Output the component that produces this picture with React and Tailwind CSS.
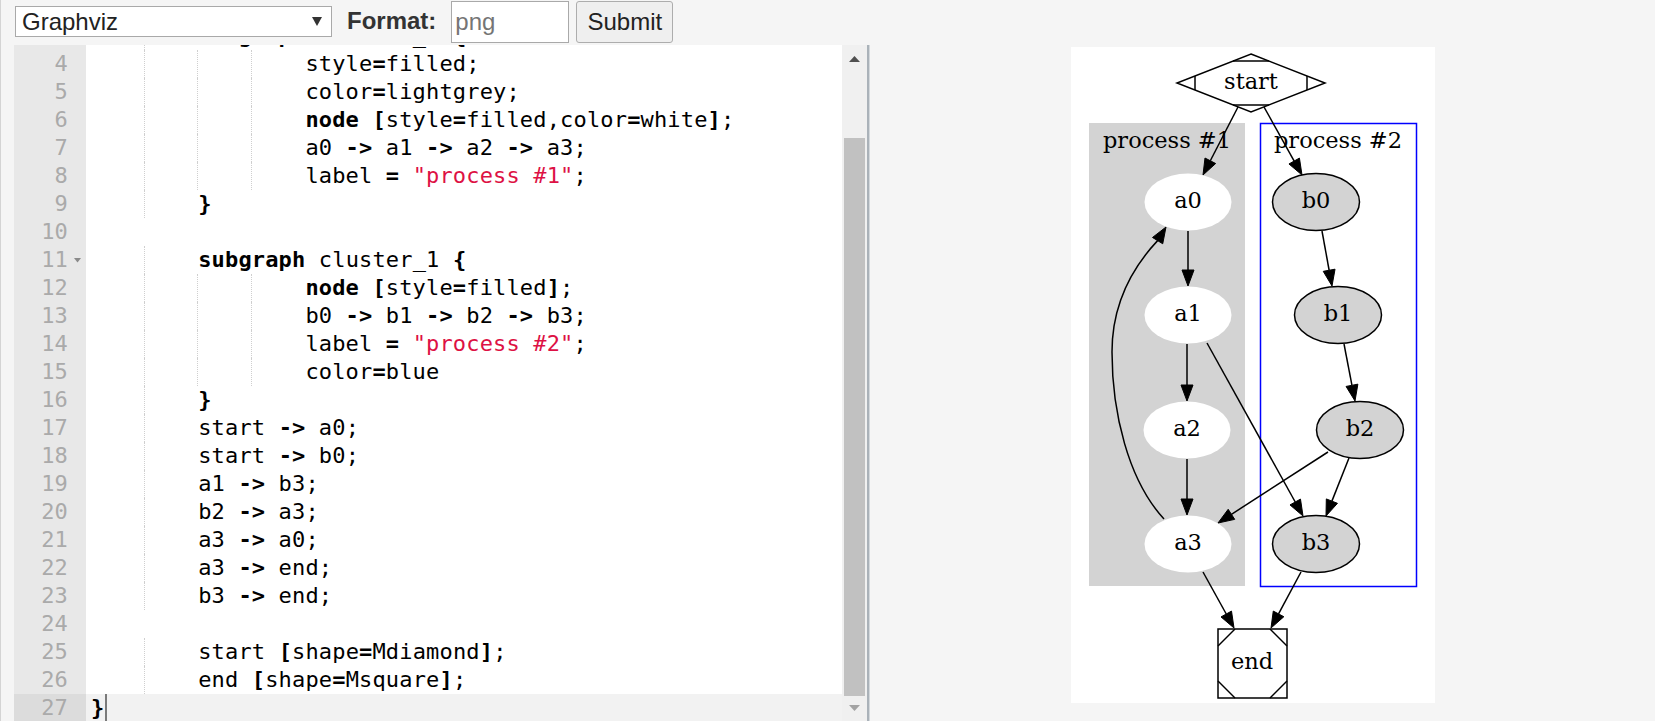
import React from "react";

const K = "k";
const S = "s";
const LINES = [
  { n: 3, t: 2, s: [["subgraph", K], [" cluster_0 "], ["{", K]] },
  { n: 4, t: 4, s: [["style"], ["=", K], ["filled;"]] },
  { n: 5, t: 4, s: [["color"], ["=", K], ["lightgrey;"]] },
  { n: 6, t: 4, s: [["node", K], [" "], ["[", K], ["style"], ["=", K], ["filled,color"], ["=", K], ["white"], ["]", K], [";"]] },
  { n: 7, t: 4, s: [["a0 "], ["->", K], [" a1 "], ["->", K], [" a2 "], ["->", K], [" a3;"]] },
  { n: 8, t: 4, s: [["label "], ["=", K], [" "], ['"process #1"', S], [";"]] },
  { n: 9, t: 2, s: [["}", K]] },
  { n: 10, t: 0, s: [] },
  { n: 11, t: 2, s: [["subgraph", K], [" cluster_1 "], ["{", K]], fold: true },
  { n: 12, t: 4, s: [["node", K], [" "], ["[", K], ["style"], ["=", K], ["filled"], ["]", K], [";"]] },
  { n: 13, t: 4, s: [["b0 "], ["->", K], [" b1 "], ["->", K], [" b2 "], ["->", K], [" b3;"]] },
  { n: 14, t: 4, s: [["label "], ["=", K], [" "], ['"process #2"', S], [";"]] },
  { n: 15, t: 4, s: [["color"], ["=", K], ["blue"]] },
  { n: 16, t: 2, s: [["}", K]] },
  { n: 17, t: 2, s: [["start "], ["->", K], [" a0;"]] },
  { n: 18, t: 2, s: [["start "], ["->", K], [" b0;"]] },
  { n: 19, t: 2, s: [["a1 "], ["->", K], [" b3;"]] },
  { n: 20, t: 2, s: [["b2 "], ["->", K], [" a3;"]] },
  { n: 21, t: 2, s: [["a3 "], ["->", K], [" a0;"]] },
  { n: 22, t: 2, s: [["a3 "], ["->", K], [" end;"]] },
  { n: 23, t: 2, s: [["b3 "], ["->", K], [" end;"]] },
  { n: 24, t: 0, s: [] },
  { n: 25, t: 2, s: [["start "], ["[", K], ["shape"], ["=", K], ["Mdiamond"], ["]", K], [";"]] },
  { n: 26, t: 2, s: [["end "], ["[", K], ["shape"], ["=", K], ["Msquare"], ["]", K], [";"]] },
  { n: 27, t: 0, s: [["}", K]], active: true },
];

function CodeLine({ line }) {
  const tabs = [];
  for (let i = 0; i < line.t; i++) {
    const guide = i < line.t - 1;
    tabs.push(
      <span
        key={"t" + i}
        className={
          guide
            ? "inline-block w-[53.6px] h-[28px] align-top border-r border-dotted border-[#cfcfcf]"
            : "inline-block w-[53.6px] h-[28px] align-top"
        }
      />
    );
  }
  return (
    <div className="flex h-[28px]">
      <div
        className={
          (line.active ? "bg-[#dcdcdc] " : "bg-[#e8e8e8] ") +
          "relative w-[72px] shrink-0 text-right pr-[18px] text-[#aaaaaa]"
        }
      >
        {line.n}
        {line.fold && (
          <svg className="absolute left-[60px] top-[12px]" width="7" height="5" viewBox="0 0 7 5">
            <polygon points="0,0 7,0 3.5,4.5" fill="#8a8a8a" />
          </svg>
        )}
      </div>
      <div
        className={
          (line.active ? "bg-[#f2f2f2] " : "bg-white ") +
          "relative flex-1 pl-[5px] whitespace-pre text-black"
        }
      >
        {tabs}
        {line.s.map((seg, i) => (
          <span
            key={i}
            className={seg[1] === K ? "font-bold" : seg[1] === S ? "text-[#dd1144]" : ""}
          >
            {seg[0]}
          </span>
        ))}
        {line.active && <span className="absolute left-[19px] top-0 w-[2px] h-[28px] bg-[#7a7a7a]" />}
      </div>
    </div>
  );
}

function arrowHead(x1, y1, x2, y2, len = 16, hw = 6) {
  const dx = x2 - x1;
  const dy = y2 - y1;
  const d = Math.hypot(dx, dy);
  const ux = dx / d;
  const uy = dy / d;
  const bx = x2 - ux * len;
  const by = y2 - uy * len;
  return {
    bx,
    by,
    pts: `${x2},${y2} ${bx - uy * hw},${by + ux * hw} ${bx + uy * hw},${by - ux * hw}`,
  };
}

const STRAIGHT = [
  [1238, 107, 1203, 175],
  [1264, 107, 1302, 175],
  [1188, 231, 1188, 286],
  [1187, 344, 1187, 401],
  [1187, 459, 1187, 515],
  [1322, 231, 1332, 286],
  [1344, 344, 1355, 401],
  [1349, 458, 1326, 516],
  [1207, 343, 1303, 516],
  [1328, 452, 1218, 523],
  [1203, 572, 1234, 628],
  [1301, 572, 1271, 628],
];

function Graph() {
  const back = arrowHead(1158, 240, 1166, 227);
  const font = { fontFamily: "'DejaVu Serif', serif", fontSize: 22.5 };
  const sw = 1.5;
  return (
    <svg width="364" height="656" viewBox="1071 47 364 656">
      <rect x="1071" y="47" width="364" height="656" fill="#ffffff" />
      <rect x="1089" y="123" width="156" height="463" fill="#d3d3d3" />
      <rect x="1260.5" y="123.5" width="156" height="463" fill="none" stroke="#0000ff" strokeWidth="1.5" />
      <text x="1167" y="148" textAnchor="middle" fill="#000" {...font}>process #1</text>
      <text x="1338" y="148" textAnchor="middle" fill="#000" {...font}>process #2</text>

      <polygon points="1251,54 1325,83 1251,112 1177,83" fill="#fff" stroke="#000" strokeWidth={sw} />
      <line x1="1233" y1="61" x2="1269" y2="61" stroke="#000" strokeWidth={sw} />
      <line x1="1233" y1="105" x2="1269" y2="105" stroke="#000" strokeWidth={sw} />
      <line x1="1195" y1="76" x2="1195" y2="90" stroke="#000" strokeWidth={sw} />
      <line x1="1307" y1="76" x2="1307" y2="90" stroke="#000" strokeWidth={sw} />
      <text x="1251" y="89" textAnchor="middle" fill="#000" {...font}>start</text>

      {[
        [1188, 202, "a0"],
        [1188, 315, "a1"],
        [1187, 430, "a2"],
        [1188, 544, "a3"],
      ].map(([cx, cy, l]) => (
        <g key={l}>
          <ellipse cx={cx} cy={cy} rx="43.5" ry="28.5" fill="#fff" />
          <text x={cx} y={cy + 6} textAnchor="middle" fill="#000" {...font}>{l}</text>
        </g>
      ))}
      {[
        [1316, 202, "b0"],
        [1338, 315, "b1"],
        [1360, 430, "b2"],
        [1316, 544, "b3"],
      ].map(([cx, cy, l]) => (
        <g key={l}>
          <ellipse cx={cx} cy={cy} rx="43.5" ry="28.5" fill="#d3d3d3" stroke="#000" strokeWidth={sw} />
          <text x={cx} y={cy + 6} textAnchor="middle" fill="#000" {...font}>{l}</text>
        </g>
      ))}

      <rect x="1218" y="629" width="69" height="69" fill="#fff" stroke="#000" strokeWidth={sw} />
      <line x1="1218" y1="646" x2="1235" y2="629" stroke="#000" strokeWidth={sw} />
      <line x1="1270" y1="629" x2="1287" y2="646" stroke="#000" strokeWidth={sw} />
      <line x1="1218" y1="681" x2="1235" y2="698" stroke="#000" strokeWidth={sw} />
      <line x1="1270" y1="698" x2="1287" y2="681" stroke="#000" strokeWidth={sw} />
      <text x="1252" y="669" textAnchor="middle" fill="#000" {...font}>end</text>

      {STRAIGHT.map(([x1, y1, x2, y2], i) => {
        const a = arrowHead(x1, y1, x2, y2);
        return (
          <g key={i}>
            <line x1={x1} y1={y1} x2={a.bx} y2={a.by} stroke="#000" strokeWidth={sw} />
            <polygon points={a.pts} fill="#000" stroke="#000" strokeWidth="1" />
          </g>
        );
      })}
      <path
        d={`M1164,519 C1128,480 1112,412 1112,352 C1112,305 1132,268 ${back.bx},${back.by}`}
        fill="none"
        stroke="#000"
        strokeWidth={sw}
      />
      <polygon points={back.pts} fill="#000" stroke="#000" strokeWidth="1" />
    </svg>
  );
}

export default function App() {
  return (
    <div className="w-[1655px] h-[721px] bg-[#f5f5f5] overflow-hidden border-l border-[#d4d4d4] font-['Liberation_Sans',Arial,sans-serif]">
      <div className="h-[45px] flex items-start">
        <div className="ml-[14px] mt-[6px] w-[317px] h-[31px] bg-white border border-[#a9a9a9] flex items-center pl-[6px] pr-[9px] text-[24px] leading-none text-[#222]">
          <span className="flex-1">Graphviz</span>
          <svg width="10" height="9" viewBox="0 0 10 9">
            <polygon points="0,0 10,0 5,9" fill="#333" />
          </svg>
        </div>
        <div className="ml-[15px] mt-[7px] text-[24px] leading-[28px] font-bold text-[#333]">Format:</div>
        <input
          readOnly
          placeholder="png"
          className="ml-[15px] mt-[1px] w-[118px] h-[42px] bg-white border border-[#a9a9a9] px-[3px] text-[24px] text-[#222] placeholder:text-[#757575] outline-none font-['Liberation_Sans',Arial,sans-serif]"
        />
        <div className="ml-[7px] mt-[1px] w-[97px] h-[42px] bg-[#efefef] border border-[#adadad] rounded-[3px] flex items-center justify-center text-[24px] text-[#222]">
          Submit
        </div>
      </div>

      <div className="flex h-[676px]">
        <div className="ml-[13px] flex h-full">
          <div className="w-[828px] h-full overflow-hidden font-['DejaVu_Sans_Mono',monospace] text-[22px] tracking-[0.16px] leading-[28px]">
            <div className="mt-[-23px]">
              {LINES.map((l) => (
                <CodeLine key={l.n} line={l} />
              ))}
            </div>
          </div>
          <div className="w-[25px] h-full bg-[#f0f0f0] flex flex-col">
            <div className="h-[93px] flex justify-center pt-[11px] pr-[1px]">
              <svg width="11" height="6" viewBox="0 0 11 6">
                <polygon points="5.5,0 11,6 0,6" fill="#505050" />
              </svg>
            </div>
            <div className="ml-[2px] w-[21px] h-[558px] bg-[#c1c1c1]" />
            <div className="flex-1 flex justify-center pt-[9px] pr-[1px]">
              <svg width="11" height="6" viewBox="0 0 11 6">
                <polygon points="0,0 11,0 5.5,6" fill="#a3a3a3" />
              </svg>
            </div>
          </div>
          <div className="w-[2px] h-full bg-[#aab2b9]" />
          <div className="w-[1px] h-full bg-[#d3d8dc]" />
        </div>
        <div className="ml-[201px] mt-[2px] w-[364px] h-[656px]">
          <Graph />
        </div>
      </div>
    </div>
  );
}
